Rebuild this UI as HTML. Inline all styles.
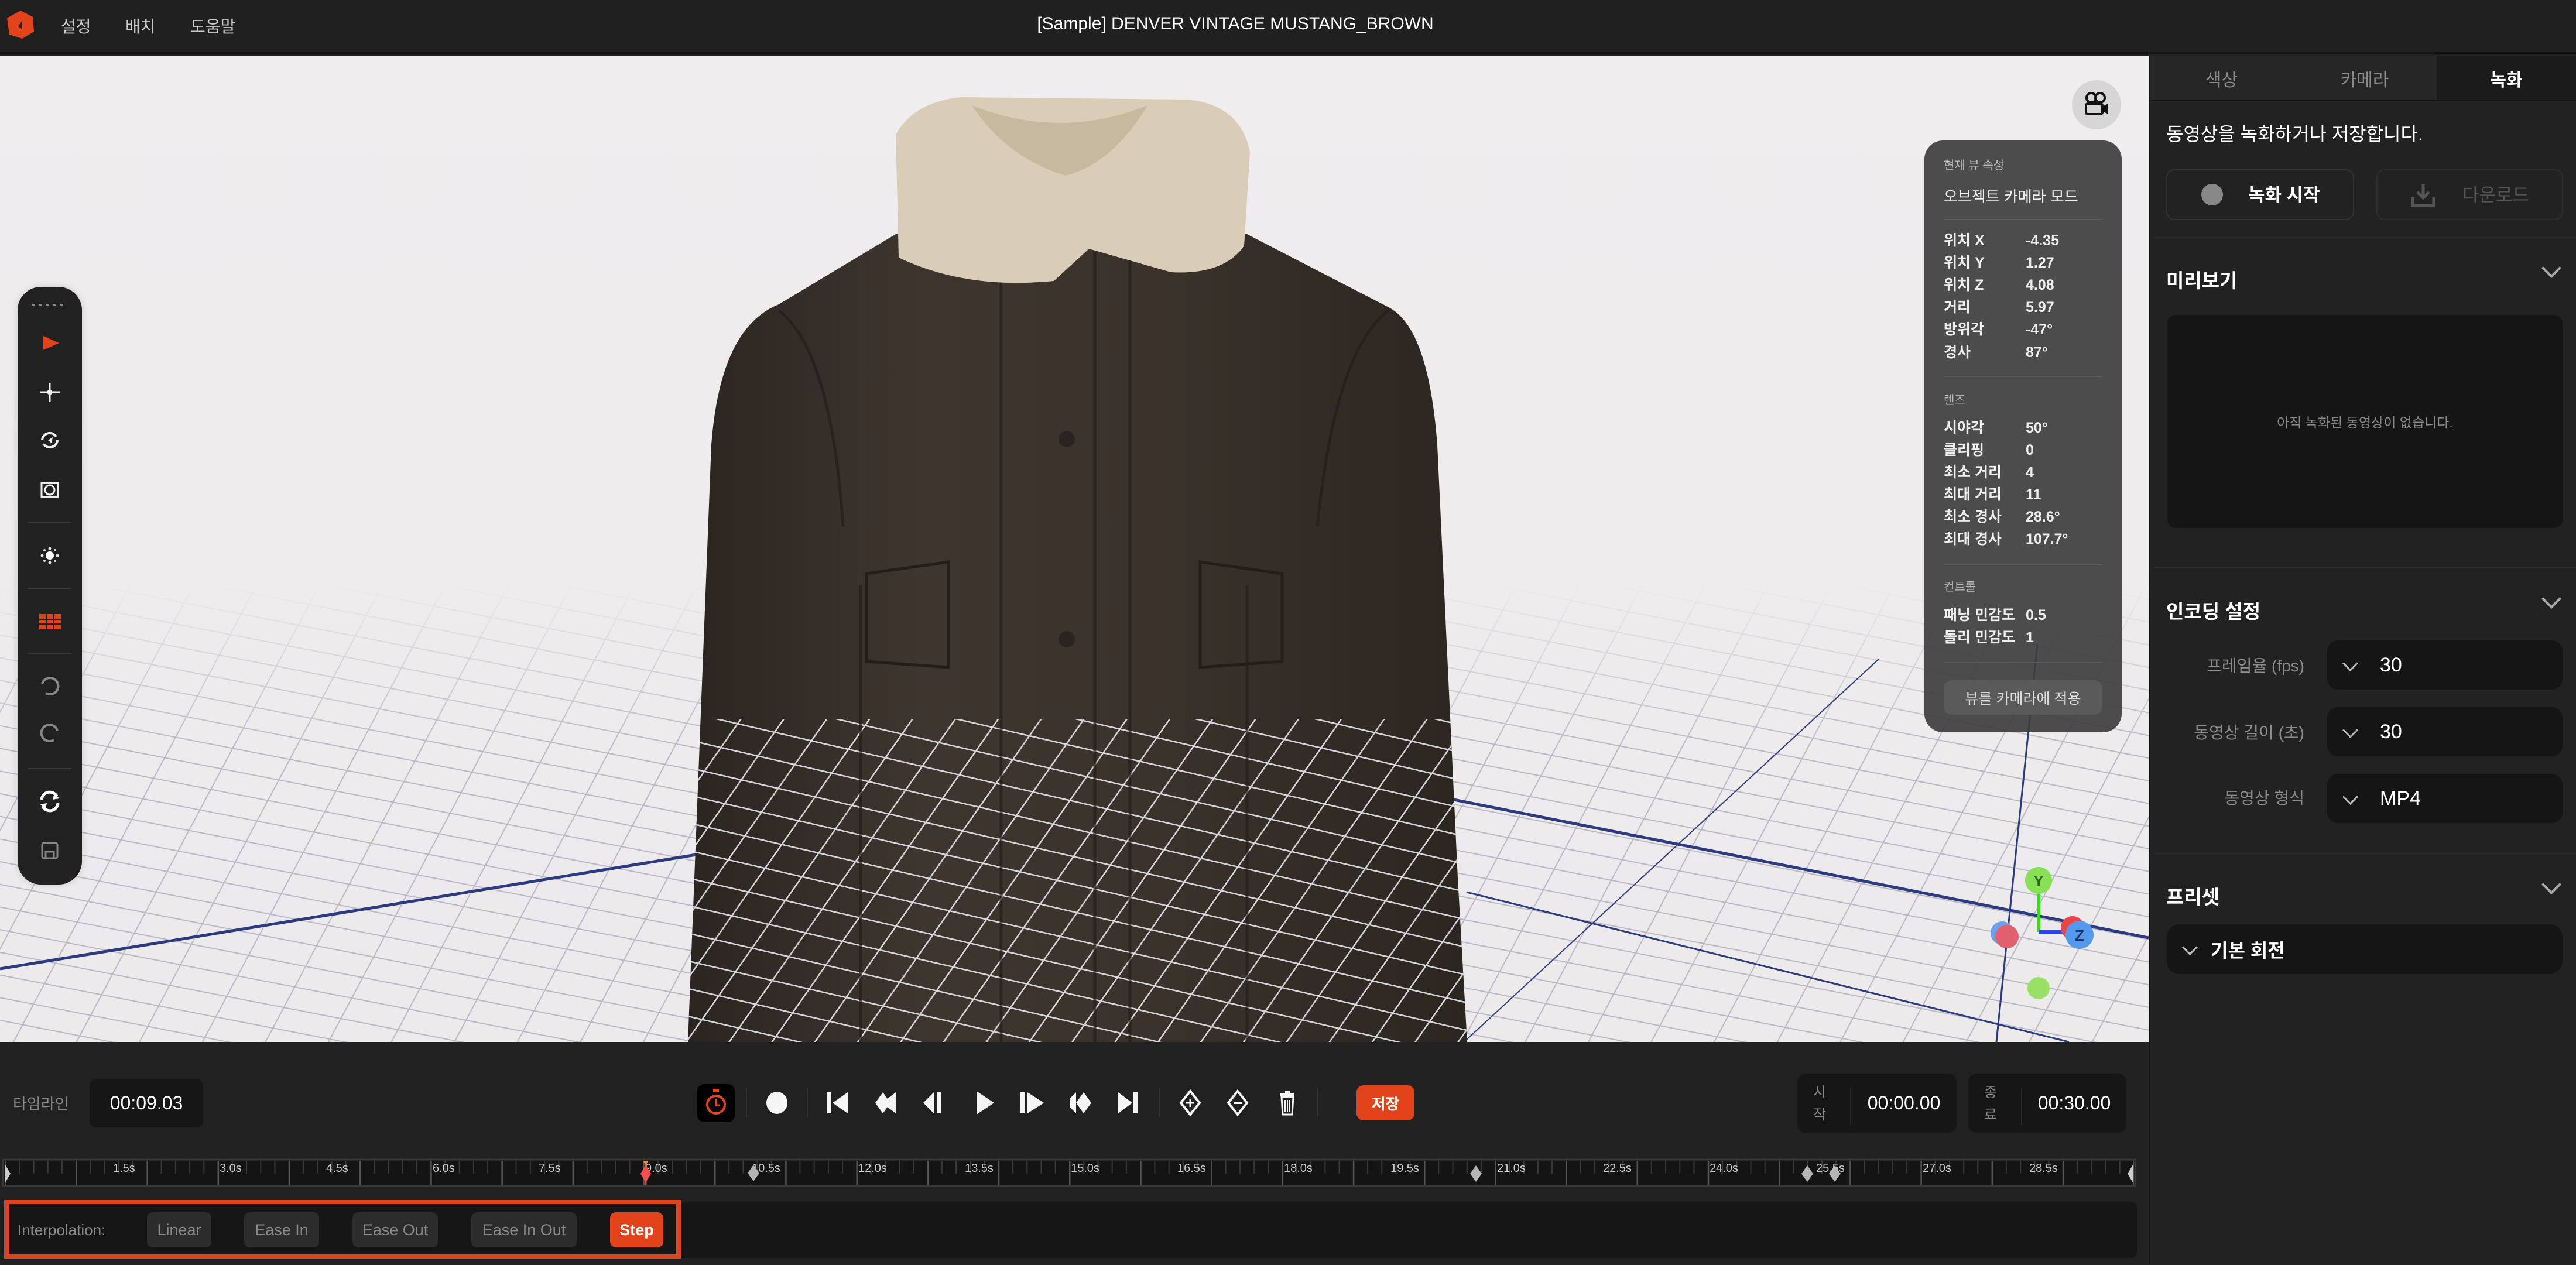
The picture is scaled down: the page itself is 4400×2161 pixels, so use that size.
<!DOCTYPE html>
<html><head><meta charset="utf-8">
<style>
*{margin:0;padding:0;box-sizing:border-box}
body{width:4400px;height:2161px;overflow:hidden;background:#212121;font-family:"Liberation Sans","Noto Sans CJK KR",sans-serif;color:#fff;position:relative}
.a{position:absolute}
.row{position:absolute;left:3320px;font-size:25px;color:#eee;font-weight:bold;line-height:30px}
.row b{position:absolute;left:140px;top:0;white-space:nowrap}
.hr{position:absolute;left:3320px;width:271px;height:2px;background:#5c5c5c}
.ib{position:absolute;border-radius:10px;background:#2c2c2c;color:#8a8a8a;font-size:27px;display:flex;align-items:center;justify-content:center}
.inp{position:absolute;left:3975px;width:402px;height:84px;background:#151515;border-radius:18px;font-size:34px;color:#fff;display:flex;align-items:center;padding-left:90px}
.inp:before{content:"";position:absolute;left:30px;top:30px;width:16px;height:16px;border-right:3px solid #bbb;border-bottom:3px solid #bbb;transform:rotate(45deg)}
.lab{position:absolute;right:464px;font-size:28px;color:#8c8c8c;text-align:right}
.chev{position:absolute;right:30px;width:24px;height:24px;border-right:4px solid #aaa;border-bottom:4px solid #aaa;transform:rotate(45deg)}
.h{position:absolute;left:3700px;font-size:33px;font-weight:bold;color:#fff}
.sep{position:absolute;top:1858px;width:2px;height:50px;background:#333}
</style></head><body>
<div class="a" style="left:0;top:0;width:4400px;height:92px;background:#202020;border-bottom:3px solid #111"></div>
<svg class="a" style="left:10px;top:17px" width="50" height="50" viewBox="0 0 50 50"><path d="M25 1 L46 12 L48 37 L28 49 L6 42 L2 14 Z" fill="#e2431a"/><path d="M27 20 L21 28 L28 33 Z" fill="#202020"/></svg>
<div class="a" style="left:104px;top:24px;font-size:28px;color:#ccc">설정</div>
<div class="a" style="left:214px;top:24px;font-size:28px;color:#ccc">배치</div>
<div class="a" style="left:325px;top:24px;font-size:28px;color:#ccc">도움말</div>
<div class="a" style="left:0;width:4400px;top:24px;text-align:center;font-size:30px;color:#fff;padding-right:180px">[Sample] DENVER VINTAGE MUSTANG_BROWN</div>

<svg class="a" style="left:0;top:95px" width="3670" height="1685" viewBox="0 95 3670 1685">
<defs>
<linearGradient id="bg" x1="0" y1="0" x2="0" y2="1"><stop offset="0" stop-color="#efedee"/><stop offset="1" stop-color="#eceaeb"/></linearGradient>
<pattern id="g1" patternUnits="userSpaceOnUse" width="4000" height="38" patternTransform="rotate(11)"><line x1="0" y1="1" x2="4000" y2="1" stroke="#b9b9c6" stroke-width="2"/></pattern>
<pattern id="g2" patternUnits="userSpaceOnUse" width="95" height="4000" patternTransform="rotate(28)"><line x1="1" y1="0" x2="1" y2="4000" stroke="#b9b9c6" stroke-width="2"/></pattern>
<pattern id="w1" patternUnits="userSpaceOnUse" width="4000" height="46" patternTransform="rotate(13)"><line x1="0" y1="1" x2="4000" y2="1" stroke="#e8e8f0" stroke-width="3"/></pattern>
<pattern id="w2" patternUnits="userSpaceOnUse" width="60" height="4000" patternTransform="rotate(35)"><line x1="1" y1="0" x2="1" y2="4000" stroke="#e8e8f0" stroke-width="3"/></pattern>
<linearGradient id="fade" x1="0" y1="0" x2="0" y2="1"><stop offset="0" stop-color="#fff" stop-opacity="0"/><stop offset="0.35" stop-color="#fff" stop-opacity="1"/></linearGradient>
<mask id="fm"><rect x="0" y="1000" width="3670" height="780" fill="url(#fade)"/></mask>
<clipPath id="jc"><path d="M1530 400 L1330 520 Q1230 560 1215 760 L1186 1500 L1175 1780 L2506 1780 L2490 1500 L2455 760 Q2440 560 2372 525 L2130 400 Z"/></clipPath>
<linearGradient id="jg" x1="0" y1="0" x2="1" y2="0"><stop offset="0" stop-color="#2b2520"/><stop offset="0.3" stop-color="#3e352e"/><stop offset="0.6" stop-color="#3a322b"/><stop offset="1" stop-color="#2c2620"/></linearGradient>
</defs>
<rect x="0" y="95" width="3670" height="1685" fill="url(#bg)"/>
<g mask="url(#fm)">
<rect x="0" y="1000" width="3670" height="780" fill="url(#g1)"/>
<rect x="0" y="1000" width="3670" height="780" fill="url(#g2)"/>
</g>
<line x1="0" y1="1655" x2="2470" y2="1250" stroke="#2c3a80" stroke-width="5"/>
<line x1="2000" y1="1270" x2="3670" y2="1602" stroke="#2c3a80" stroke-width="5"/>
<line x1="3480" y1="1100" x2="3410" y2="1780" stroke="#2c3a80" stroke-width="3"/>
<line x1="2505" y1="1524" x2="3534" y2="1780" stroke="#2c3a80" stroke-width="3"/>
<line x1="3210" y1="1125" x2="2505" y2="1776" stroke="#2c3a80" stroke-width="2"/>
<path d="M1330 520 Q1230 560 1215 760 L1186 1500 L1175 1780 L2506 1780 L2490 1500 L2455 760 Q2440 560 2372 525 L2130 400 L1530 400 Z" fill="url(#jg)"/>
<g clip-path="url(#jc)" opacity="0.9">
<rect x="1150" y="1228" width="1400" height="560" fill="url(#w1)"/>
<rect x="1150" y="1228" width="1400" height="560" fill="url(#w2)"/>
</g>
<path d="M1470 1000 L1470 1780 M1710 470 L1710 1780 M1870 430 L1870 1780 M1930 430 L1930 1780 M2130 1000 L2130 1780 M1330 530 Q1420 600 1440 900 M2372 530 Q2280 600 2250 900" stroke="#231d18" stroke-width="5" fill="none" opacity="0.7"/>
<path d="M1480 980 L1620 960 L1620 1140 L1480 1130 Z M2050 960 L2190 980 L2190 1130 L2050 1140 Z" fill="none" stroke="#241e19" stroke-width="5"/>
<circle cx="1822" cy="440" r="14" fill="#2a2420"/><circle cx="1822" cy="750" r="14" fill="#2a2420"/><circle cx="1822" cy="1092" r="14" fill="#2a2420"/>
<path d="M1530 230 Q1560 175 1640 166 L2030 170 Q2120 180 2135 260 L2125 420 Q2090 470 2000 465 L1860 425 L1800 480 Q1650 495 1535 440 Z" fill="#d9cdb7"/>
<path d="M1660 180 Q1810 240 1960 180 Q1900 280 1820 300 Q1720 270 1660 180 Z" fill="#c7b99f"/>
<line x1="3482" y1="1504" x2="3482" y2="1592" stroke="#33dd22" stroke-width="6"/>
<line x1="3482" y1="1592" x2="3550" y2="1592" stroke="#2244ff" stroke-width="6"/>
<circle cx="3420" cy="1594" r="20" fill="#6aa0ee"/><circle cx="3428" cy="1600" r="20" fill="#e06070"/>
<circle cx="3540" cy="1585" r="20" fill="#ee4444"/>
<circle cx="3482" cy="1504" r="23" fill="#88e055"/><text x="3482" y="1514" text-anchor="middle" font-size="26" font-weight="bold" fill="#336622" font-family="Liberation Sans">Y</text>
<circle cx="3552" cy="1597" r="24" fill="#5599ee"/><text x="3552" y="1607" text-anchor="middle" font-size="26" font-weight="bold" fill="#223366" font-family="Liberation Sans">Z</text>
<circle cx="3482" cy="1688" r="19" fill="#99e066"/>
</svg>

<div class="a" style="left:30px;top:490px;width:110px;height:1021px;background:#212121;border-radius:40px;box-shadow:0 0 12px rgba(0,0,0,.15)"></div>
<svg class="a" style="left:30px;top:490px" width="110" height="1021" viewBox="30 490 110 1021">
<g fill="#888"><rect x="55" y="519" width="5" height="3"/><rect x="67" y="519" width="5" height="3"/><rect x="79" y="519" width="5" height="3"/><rect x="91" y="519" width="5" height="3"/><rect x="103" y="519" width="5" height="3"/></g>
<path d="M74 574 L101 586 L74 598 Z" fill="#e2431a"/>
<g stroke="#eee" stroke-width="3" fill="#eee"><line x1="68" y1="670" x2="102" y2="670"/><line x1="85" y1="655" x2="85" y2="686"/><circle cx="85" cy="670" r="3"/></g>
<path d="M72 752 A13 13 0 0 1 96 746 M98 752 A13 13 0 0 1 74 758" stroke="#eee" stroke-width="4" fill="none"/><path d="M82 752 L90 747 L88 757 Z" fill="#eee"/>
<rect x="71" y="825" width="28" height="24" fill="none" stroke="#eee" stroke-width="3"/><circle cx="85" cy="837" r="8" fill="none" stroke="#eee" stroke-width="3"/>
<line x1="48" y1="892" x2="122" y2="892" stroke="#3a3a3a" stroke-width="2"/>
<circle cx="85" cy="949" r="7" fill="#fff"/><g fill="#ddd"><circle cx="72" cy="949" r="2.5"/><circle cx="98" cy="949" r="2.5"/><circle cx="85" cy="937" r="2.5"/><circle cx="85" cy="961" r="2.5"/><circle cx="76" cy="940" r="2"/><circle cx="94" cy="940" r="2"/><circle cx="76" cy="958" r="2"/><circle cx="94" cy="958" r="2"/></g>
<line x1="48" y1="1005" x2="122" y2="1005" stroke="#3a3a3a" stroke-width="2"/>
<rect x="67" y="1049" width="37" height="26" fill="#e2431a"/><path d="M67 1058 H104 M67 1066 H104 M79 1049 V1075 M91 1049 V1075" stroke="#212121" stroke-width="2"/>
<line x1="48" y1="1117" x2="122" y2="1117" stroke="#3a3a3a" stroke-width="2"/>
<path d="M72 1168 A14 14 0 1 1 78 1184" stroke="#888" stroke-width="4" fill="none"/>
<path d="M98 1248 A14 14 0 1 0 92 1264" stroke="#888" stroke-width="4" fill="none"/>
<line x1="48" y1="1313" x2="122" y2="1313" stroke="#3a3a3a" stroke-width="2"/>
<path d="M71 1366 A14 14 0 0 1 97 1360 M99 1372 A14 14 0 0 1 73 1378" stroke="#fff" stroke-width="5" fill="none"/><path d="M93 1354 L101 1364 L90 1366 Z M77 1384 L69 1374 L80 1372 Z" fill="#fff"/>
<rect x="72" y="1440" width="26" height="26" rx="3" fill="none" stroke="#888" stroke-width="3"/><rect x="78" y="1455" width="14" height="11" fill="none" stroke="#888" stroke-width="3"/>
</svg>

<div class="a" style="left:3539px;top:137px;width:84px;height:84px;border-radius:50%;background:#d6d6d6"></div>
<svg class="a" style="left:3557px;top:156px" width="48" height="46" viewBox="0 0 48 46"><circle cx="15" cy="11" r="8" fill="none" stroke="#111" stroke-width="4"/><circle cx="30" cy="11" r="8" fill="none" stroke="#111" stroke-width="4"/><rect x="6" y="21" width="28" height="18" rx="3" fill="none" stroke="#111" stroke-width="4"/><path d="M34 26 L44 21 V39 L34 34 Z" fill="#111"/></svg>

<div class="a" style="left:3287px;top:240px;width:337px;height:1011px;background:rgba(62,62,62,.92);border-radius:32px"></div>
<div class="a" style="left:3320px;top:266px;font-size:20px;color:#bbb">현재 뷰 속성</div>
<div class="a" style="left:3320px;top:316px;font-size:26px;color:#eee">오브젝트 카메라 모드</div>
<div class="hr" style="top:374px"></div>
<div class="row" style="top:396px">위치 X<b>-4.35</b></div>
<div class="row" style="top:434px">위치 Y<b>1.27</b></div>
<div class="row" style="top:472px">위치 Z<b>4.08</b></div>
<div class="row" style="top:510px">거리<b>5.97</b></div>
<div class="row" style="top:548px">방위각<b>-47°</b></div>
<div class="row" style="top:587px">경사<b>87°</b></div>
<div class="hr" style="top:642px"></div>
<div class="a" style="left:3320px;top:667px;font-size:20px;color:#bbb">렌즈</div>
<div class="row" style="top:716px">시야각<b>50°</b></div>
<div class="row" style="top:754px">클리핑<b>0</b></div>
<div class="row" style="top:792px">최소 거리<b>4</b></div>
<div class="row" style="top:830px">최대 거리<b>11</b></div>
<div class="row" style="top:868px">최소 경사<b>28.6°</b></div>
<div class="row" style="top:906px">최대 경사<b>107.7°</b></div>
<div class="hr" style="top:964px"></div>
<div class="a" style="left:3320px;top:986px;font-size:20px;color:#bbb">컨트롤</div>
<div class="row" style="top:1036px">패닝 민감도<b>0.5</b></div>
<div class="row" style="top:1074px">돌리 민감도<b>1</b></div>
<div class="hr" style="top:1131px"></div>
<div class="a" style="left:3320px;top:1162px;width:271px;height:59px;background:#5a5a5a;border-radius:14px;font-size:25px;color:#ddd;display:flex;align-items:center;justify-content:center">뷰를 카메라에 적용</div>

<div class="a" style="left:3670px;top:95px;width:730px;height:2066px;background:#222;border-left:3px solid #111"></div>
<div class="a" style="left:3673px;top:95px;width:727px;height:78px;background:#262626;border-bottom:3px solid #111"></div>
<div class="a" style="left:4162px;top:95px;width:238px;height:78px;background:#1b1b1b;border-bottom:3px solid #111"></div>
<div class="a" style="left:3673px;top:112px;width:243px;text-align:center;font-size:30px;color:#8a8a8a">색상</div>
<div class="a" style="left:3916px;top:112px;width:246px;text-align:center;font-size:30px;color:#8a8a8a">카메라</div>
<div class="a" style="left:4162px;top:112px;width:238px;text-align:center;font-size:30px;color:#fff;font-weight:bold">녹화</div>
<div class="a" style="left:3700px;top:204px;font-size:32px;color:#fff">동영상을 녹화하거나 저장합니다.</div>
<div class="a" style="left:3700px;top:289px;width:321px;height:87px;border:2px solid #333;border-radius:14px;background:#222"></div>
<div class="a" style="left:3760px;top:314px;width:37px;height:37px;border-radius:50%;background:#888"></div>
<div class="a" style="left:3840px;top:308px;font-size:31px;color:#fff;font-weight:bold">녹화 시작</div>
<div class="a" style="left:4059px;top:289px;width:319px;height:87px;border:2px solid #2e2e2e;border-radius:14px"></div>
<svg class="a" style="left:4117px;top:311px" width="44" height="44" viewBox="0 0 44 44"><path d="M22 4 V26 M12 17 L22 27 L32 17 M4 26 V40 H40 V26" stroke="#555" stroke-width="5" fill="none"/></svg>
<div class="a" style="left:4206px;top:308px;font-size:31px;color:#555">다운로드</div>
<div class="a" style="left:3680px;top:405px;width:720px;height:2px;background:#2e2e2e"></div>
<div class="h" style="top:453px">미리보기</div>
<div class="chev" style="top:446px"></div>
<div class="a" style="left:3702px;top:538px;width:675px;height:364px;background:#151515;border-radius:14px;display:flex;align-items:center;justify-content:center;font-size:23px;color:#888">아직 녹화된 동영상이 없습니다.</div>
<div class="a" style="left:3680px;top:969px;width:720px;height:2px;background:#2e2e2e"></div>
<div class="h" style="top:1018px">인코딩 설정</div>
<div class="chev" style="top:1011px"></div>
<div class="lab" style="top:1116px">프레임율 (fps)</div>
<div class="inp" style="top:1094px">30</div>
<div class="lab" style="top:1230px">동영상 길이 (초)</div>
<div class="inp" style="top:1208px">30</div>
<div class="lab" style="top:1342px">동영상 형식</div>
<div class="inp" style="top:1322px">MP4</div>
<div class="a" style="left:3680px;top:1457px;width:720px;height:2px;background:#2e2e2e"></div>
<div class="h" style="top:1506px">프리셋</div>
<div class="chev" style="top:1499px"></div>
<div class="inp" style="left:3701px;width:676px;top:1579px;height:85px;font-size:32px;padding-left:75px;font-weight:bold;border-radius:22px">기본 회전</div>

<div class="a" style="left:22px;top:1866px;font-size:26px;color:#888">타임라인</div>
<div class="a" style="left:153px;top:1843px;width:194px;height:83px;background:#161616;border-radius:12px;font-size:32px;color:#fff;display:flex;align-items:center;justify-content:center">00:09.03</div>
<div class="a" style="left:1191px;top:1852px;width:64px;height:65px;background:#000;border-radius:12px"></div>
<svg class="a" style="left:1204px;top:1858px" width="38" height="52" viewBox="0 0 38 52"><rect x="14" y="2" width="10" height="6" fill="#e2431a"/><circle cx="19" cy="29" r="15" fill="none" stroke="#e2431a" stroke-width="4"/><path d="M19 20 V30 H26" stroke="#e2431a" stroke-width="3" fill="none"/></svg>
<div class="sep" style="left:1274px"></div>
<div class="sep" style="left:1378px"></div>
<div class="sep" style="left:1979px"></div>
<div class="sep" style="left:2250px"></div>
<svg class="a" style="left:1290px;top:1860px" width="960" height="50" viewBox="1290 1860 960 50" fill="#f5f5f5">
<ellipse cx="1327" cy="1884" rx="18" ry="19"/>
<rect x="1413" y="1866" width="7" height="36"/><path d="M1422 1884 L1448 1866 V1902 Z"/>
<path d="M1495 1884 L1508 1866 L1521 1884 L1508 1902 Z"/><path d="M1517 1876 L1530 1866 V1902 L1517 1892 Z" />
<path d="M1577 1884 L1595 1866 V1902 Z"/><rect x="1600" y="1866" width="7" height="36"/>
<path d="M1668 1864 L1698 1884 L1668 1904 Z"/>
<rect x="1743" y="1866" width="7" height="36"/><path d="M1755 1866 L1783 1884 L1755 1902 Z"/>
<path d="M1828 1876 L1838 1866 V1902 L1828 1892 Z"/><path d="M1838 1884 L1851 1866 L1864 1884 L1851 1902 Z"/>
<path d="M1910 1866 L1934 1884 L1910 1902 Z"/><rect x="1936" y="1866" width="7" height="36"/>
<path d="M2033 1864 L2049 1884 L2033 1904 L2017 1884 Z" fill="none" stroke="#f5f5f5" stroke-width="4"/><path d="M2033 1877 V1891 M2026 1884 H2040" stroke="#f5f5f5" stroke-width="3"/>
<path d="M2114 1864 L2130 1884 L2114 1904 L2098 1884 Z" fill="none" stroke="#f5f5f5" stroke-width="4"/><path d="M2107 1884 H2121" stroke="#f5f5f5" stroke-width="4"/>
<rect x="2195" y="1864" width="8" height="4"/><rect x="2187" y="1868" width="24" height="4"/><path d="M2189 1874 H2209 L2207 1904 H2191 Z" fill="none" stroke="#f5f5f5" stroke-width="3"/><path d="M2195 1879 V1899 M2199 1879 V1899 M2203 1879 V1899" stroke="#f5f5f5" stroke-width="2"/>
</svg>
<div class="a" style="left:2317px;top:1854px;width:99px;height:60px;background:#e2431a;border-radius:12px;font-size:26px;color:#fff;font-weight:bold;display:flex;align-items:center;justify-content:center">저장</div>

<div class="a" style="left:3070px;top:1834px;width:272px;height:101px;background:#161616;border-radius:14px"></div>
<div class="a" style="left:3097px;top:1848px;font-size:24px;color:#888;line-height:38px;width:24px">시<br>작</div>
<div class="a" style="left:3160px;top:1857px;width:2px;height:64px;background:#2a2a2a"></div>
<div class="a" style="left:3162px;top:1834px;width:180px;height:101px;display:flex;align-items:center;justify-content:center;font-size:32px;color:#fff">00:00.00</div>
<div class="a" style="left:3362px;top:1834px;width:270px;height:101px;background:#161616;border-radius:14px"></div>
<div class="a" style="left:3389px;top:1848px;font-size:24px;color:#888;line-height:38px;width:24px">종<br>료</div>
<div class="a" style="left:3452px;top:1857px;width:2px;height:64px;background:#2a2a2a"></div>
<div class="a" style="left:3454px;top:1834px;width:178px;height:101px;display:flex;align-items:center;justify-content:center;font-size:32px;color:#fff">00:30.00</div>

<svg class="a" style="left:0;top:1978px" width="3670" height="52" viewBox="0 1978 3670 52">
<defs><pattern id="tk" patternUnits="userSpaceOnUse" x="8" y="1983" width="121.2" height="41"><line x1="1" y1="0" x2="1" y2="41" stroke="#555" stroke-width="3"/><g stroke="#3a3a3a" stroke-width="2"><line x1="25.2" y1="0" x2="25.2" y2="22"/><line x1="49.5" y1="0" x2="49.5" y2="22"/><line x1="73.7" y1="0" x2="73.7" y2="22"/><line x1="97.9" y1="0" x2="97.9" y2="22"/></g></pattern></defs>
<rect x="5" y="1981" width="3642" height="45" fill="#141414" stroke="#383838" stroke-width="3"/>
<rect x="8" y="1983" width="3637" height="41" fill="url(#tk)"/>
<g font-size="20" fill="#ccc" font-family="Liberation Sans">
<text x="193" y="2002">1.5s</text><text x="375" y="2002">3.0s</text><text x="557" y="2002">4.5s</text><text x="739" y="2002">6.0s</text><text x="920" y="2002">7.5s</text><text x="1102" y="2002">9.0s</text><text x="1284" y="2002">10.5s</text><text x="1466" y="2002">12.0s</text><text x="1648" y="2002">13.5s</text><text x="1829" y="2002">15.0s</text><text x="2011" y="2002">16.5s</text><text x="2193" y="2002">18.0s</text><text x="2375" y="2002">19.5s</text><text x="2557" y="2002">21.0s</text><text x="2738" y="2002">22.5s</text><text x="2920" y="2002">24.0s</text><text x="3102" y="2002">25.5s</text><text x="3284" y="2002">27.0s</text><text x="3466" y="2002">28.5s</text>
</g>
<path d="M9 1990 L18 2005 L9 2020 Z" fill="#ccc"/><path d="M3643 1990 L3634 2005 L3643 2020 Z" fill="#ccc"/>
<g fill="#b5b5b5"><path d="M1287 1990 L1297 2004 L1287 2018 L1277 2004 Z"/><path d="M2521 1991 L2531 2005 L2521 2019 L2511 2005 Z"/><path d="M3087 1991 L3097 2005 L3087 2019 L3077 2005 Z"/><path d="M3134 1991 L3144 2005 L3134 2019 L3124 2005 Z"/></g>
<line x1="1103" y1="1983" x2="1103" y2="2024" stroke="#e2431a" stroke-width="3"/>
<path d="M1103 1990 L1112 2005 L1103 2020 L1094 2005 Z" fill="#ff4d4d"/><path d="M1098 1983 H1108 L1103 1990 Z" fill="#f39020"/>
</svg>

<div class="a" style="left:5px;top:2053px;width:3646px;height:96px;background:#161616;border-radius:12px"></div>
<div class="a" style="left:7px;top:2050px;width:1156px;height:100px;border:7px solid #e2431a;border-left-width:8px;border-right-width:8px"></div>
<div class="a" style="left:30px;top:2086px;font-size:26px;color:#8c8c8c">Interpolation:</div>
<div class="ib" style="left:251px;top:2071px;width:110px;height:60px">Linear</div>
<div class="ib" style="left:417px;top:2071px;width:128px;height:60px">Ease In</div>
<div class="ib" style="left:602px;top:2071px;width:146px;height:60px">Ease Out</div>
<div class="ib" style="left:805px;top:2071px;width:180px;height:60px">Ease In Out</div>
<div class="ib" style="left:1042px;top:2071px;width:91px;height:60px;background:#e2431a;color:#fff;font-weight:bold">Step</div>
</body></html>
